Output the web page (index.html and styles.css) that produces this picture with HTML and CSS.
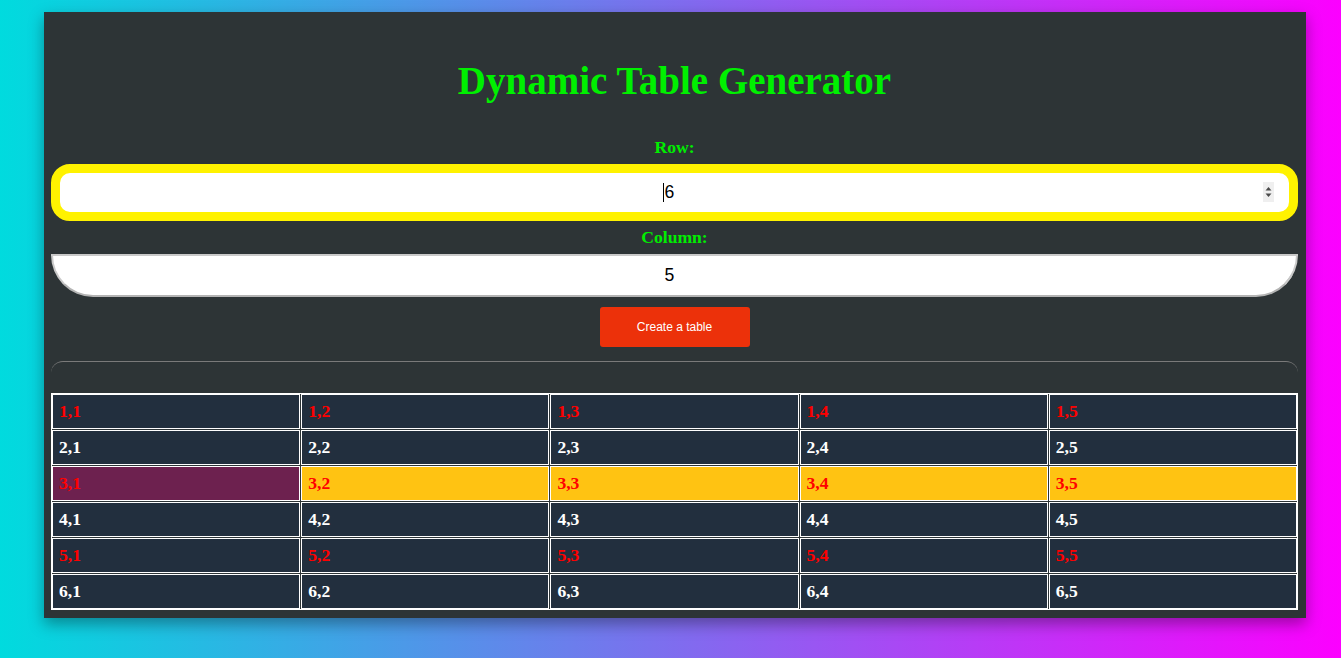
FILE: index.html
```html
<!DOCTYPE html>
<html lang="en">
<head>
<meta charset="utf-8">
<title>Dynamic Table Generator</title>
<link rel="stylesheet" href="styles.css">
</head>
<body>
<main class="card">
  <h1 class="title">Dynamic Table Generator</h1>
  <label class="label" for="rows">Row:</label>
  <div class="field field-focus">
    <input id="rows" class="input input-row" type="text" value="6">
    <span class="caret"></span>
    <span class="spin">
      <svg width="11" height="20" viewBox="0 0 11 20"><path d="M2.5 8.5 L5.5 5 L8.5 8.5 Z" fill="#4a4a4a"/><path d="M2.5 11.5 L5.5 15 L8.5 11.5 Z" fill="#4a4a4a"/></svg>
    </span>
  </div>
  <label class="label" for="cols">Column:</label>
  <div class="field">
    <input id="cols" class="input input-col" type="text" value="5">
  </div>
  <button class="btn" type="button">Create a table</button>
  <section class="table-wrap">
    <table class="grid">
      <tbody>
        <tr class="odd"><td>1,1</td><td>1,2</td><td>1,3</td><td>1,4</td><td>1,5</td></tr>
        <tr class="even"><td>2,1</td><td>2,2</td><td>2,3</td><td>2,4</td><td>2,5</td></tr>
        <tr class="odd hl"><td class="first">3,1</td><td>3,2</td><td>3,3</td><td>3,4</td><td>3,5</td></tr>
        <tr class="even"><td>4,1</td><td>4,2</td><td>4,3</td><td>4,4</td><td>4,5</td></tr>
        <tr class="odd"><td>5,1</td><td>5,2</td><td>5,3</td><td>5,4</td><td>5,5</td></tr>
        <tr class="even"><td>6,1</td><td>6,2</td><td>6,3</td><td>6,4</td><td>6,5</td></tr>
      </tbody>
    </table>
  </section>
</main>
</body>
</html>
```
FILE: styles.css
```css
* { box-sizing: border-box; }
html, body { margin: 0; padding: 0; }
body {
  min-height: 100vh;
  background: linear-gradient(to right, #00dbde, #fc00ff);
  font-family: "Liberation Serif", "Times New Roman", serif;
  overflow: hidden;
}
.card {
  width: 1262px;
  margin: 12px 0 0 44px;
  padding: 0 8px 8px 7px;
  background: #2d3436;
  box-shadow: 0 6px 14px rgba(0, 0, 0, 0.35);
  display: flex;
  flex-direction: column;
  align-items: stretch;
}
.title {
  margin: 46px 0 0;
  line-height: 45px;
  font-size: 39px;
  font-weight: bold;
  color: #00f000;
  text-align: center;
}
.label {
  display: block;
  text-align: center;
  font-weight: bold;
  font-size: 17.6px;
  line-height: 20px;
  color: #00ee00;
}
.title + .label { margin-top: 34px; }
.field { position: relative; }
.field-focus { margin-top: 7px; }
.field + .label { margin-top: 6px; }
.label + .field:not(.field-focus) { margin-top: 7px; }
.input {
  display: block;
  width: 100%;
  font-family: "Liberation Sans", Arial, sans-serif;
  font-size: 17.6px;
  color: #000;
  text-align: center;
  background: #fff;
  outline: none;
  padding: 0 18px 0 8px;
}
.input-row {
  height: 57px;
  border: 9px solid #fff200;
  border-radius: 19px;
}
.input-col {
  height: 43px;
  border: 2px solid #c9c9c9;
  border-bottom-color: #b4b4b4;
  border-radius: 0 0 42px 42px;
}
.caret {
  position: absolute;
  left: 612px;
  top: 19px;
  width: 1px;
  height: 19px;
  background: #000;
}
.spin {
  position: absolute;
  right: 24px;
  top: 18px;
  width: 11px;
  height: 20px;
  background: #efefef;
  display: flex;
}
.btn {
  align-self: center;
  margin-top: 10px;
  width: 150px;
  height: 40px;
  border: none;
  border-radius: 3px;
  background: #ec310a;
  color: #fff;
  font-family: "Liberation Sans", Arial, sans-serif;
  font-size: 12px;
}
.table-wrap {
  margin-top: 14px;
  border-top: 1px solid #7a7a7a;
  border-radius: 12px 12px 0 0;
  padding-top: 31px;
}
.grid {
  width: 100%;
  table-layout: fixed;
  border-collapse: separate;
  border-spacing: 1px;
  box-shadow: inset 0 0 0 1px #fff;
}
.grid td {
  border: 1px solid #fff;
  background: #222f3e;
  padding: 6px 6px;
  line-height: 21px;
  font-size: 17.6px;
  font-weight: bold;
  text-align: left;
}
.odd td { color: #ff0000; }
.even td { color: #fff; }
.hl td { background: #ffc312; }
.hl td.first { background: #6d214f; }
```
